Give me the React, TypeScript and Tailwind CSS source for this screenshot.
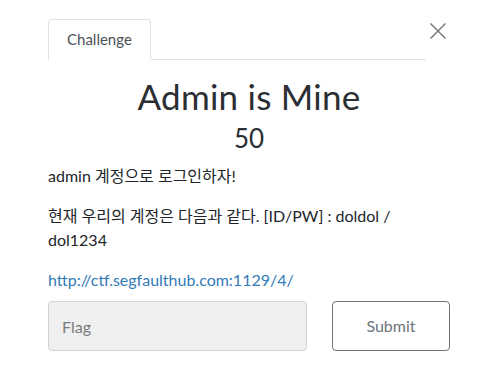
import React from 'react';

const LATO = 'font-["Lato","Noto_Sans_CJK_KR",sans-serif]';

function CloseIcon() {
  return (
    <svg className="size-[16px]" fill="none" stroke="#7a7a7a" strokeWidth={1.5} viewBox="0 0 16 16">
      <path d="M0.5 0.5 15.5 15.5M15.5 0.5 0.5 15.5" />
    </svg>
  );
}

export default function App() {
  return (
    <div className={`${LATO} min-h-[373px] w-[493px] bg-white text-[#212529]`}>
      <div className="pl-[48px] pr-[43px] pt-[19px]">
        <div className="flex items-start">
          <div className="flex flex-1 border-b border-[#dee2e6]">
            <div className="-mb-px rounded-t-[4px] border border-[#dee2e6] border-b-white bg-white px-[18px] pb-[10px] pt-[9px] text-[15px] leading-[20px] text-[#495057]">
              Challenge
            </div>
          </div>
          <button className="mx-[4px] mt-[4px] flex size-[16px] items-center justify-center">
            <CloseIcon />
          </button>
        </div>

        <h3 className="mt-[15px] text-center text-[35px] font-normal leading-[1.2] tracking-[0.25px] text-[#2b2f33]">Admin is Mine</h3>
        <h4 className="mt-[6px] text-center text-[26px] font-normal leading-[1.2] text-[#2b2f33]">50</h4>

        <div className="mt-[10px] text-[16px] leading-[24px]">
          <p className="mb-[16px]">admin 계정으로 로그인하자!</p>
          <p className="mb-[16px]">현재 우리의 계정은 다음과 같다. [ID/PW] : doldol / dol1234</p>
          <a className="text-[#337ab7]" href="#">http://ctf.segfaulthub.com:1129/4/</a>
        </div>

        <div className="mt-[9px] flex gap-[25px]">
          <input
            className="h-[50px] w-[259px] rounded-[4px] border border-[#ced4da] bg-[#efefef] px-[13px] text-[16px] text-[#495057] placeholder:text-[#7b7b7b]"
            placeholder="Flag"
            type="text"
          />
          <button className="h-[50px] w-[118px] rounded-[4px] border border-[#6c757d] bg-white text-[16px] text-[#6c757d]">
            Submit
          </button>
        </div>
      </div>
    </div>
  );
}
